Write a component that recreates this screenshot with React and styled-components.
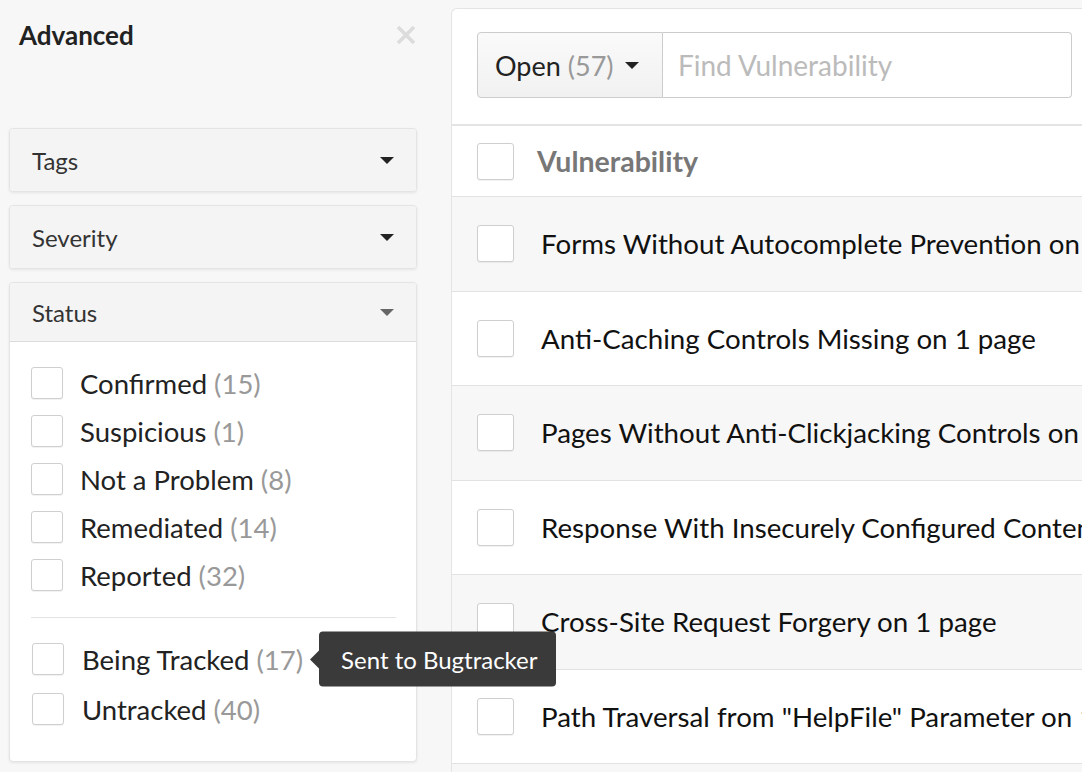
import React from 'react';
import styled, { createGlobalStyle } from 'styled-components';

const GlobalStyle = createGlobalStyle`
  html, body {
    margin: 0;
    padding: 0;
    background: #f7f7f7;
    overflow: hidden;
  }
  body {
    font-family: Lato, "Liberation Sans", sans-serif;
    color: #222;
  }
`;

const Page = styled.div`
  display: flex;
  align-items: flex-start;
  width: 1082px;
  height: 772px;
  overflow: hidden;
`;

const Sidebar = styled.aside`
  flex: 0 0 408px;
  padding: 18px 0 0 9px;
  display: flex;
  flex-direction: column;
`;

const SideHead = styled.div`
  display: flex;
  justify-content: space-between;
  align-items: center;
  padding: 0 0 0 10px;
  height: 34px;
  margin-bottom: 76px;
`;

const Title = styled.h2`
  margin: 0;
  font-size: 26px;
  font-weight: 700;
  color: #222;
`;

const Close = styled.svg`
  width: 20px;
  height: 20px;
  margin-right: 1px;
`;

const Panel = styled.section`
  margin-bottom: 13px;
  border: 1px solid #e4e4e4;
  border-radius: 4px;
  background: #fff;
  box-shadow: 0 1px 3px rgba(0, 0, 0, 0.08);
`;

const PanelHead = styled.div`
  height: ${(p) => (p.$open ? 58 : 62)}px;
  display: flex;
  align-items: center;
  justify-content: space-between;
  padding: 0 22px 0 22px;
  background: #f4f4f4;
  border-radius: ${(p) => (p.$open ? '4px 4px 0 0' : '4px')};
  border-bottom: ${(p) => (p.$open ? '1px solid #dcdcdc' : 'none')};
  font-size: 24px;
  color: #333;
`;

const Caret = styled.span`
  width: 0;
  height: 0;
  border-left: 7px solid transparent;
  border-right: 7px solid transparent;
  border-top: 7px solid ${(p) => p.$color || '#222'};
`;

const PanelBody = styled.div`
  padding: 17px 20px 26px 21px;
`;

const CheckRow = styled.label`
  display: flex;
  align-items: center;
  height: ${(p) => p.$h || 48}px;
  padding-left: ${(p) => p.$indent || 0}px;
  font-size: 27.5px;
  color: #222;
  white-space: nowrap;
`;

const Box = styled.span`
  flex: 0 0 auto;
  box-sizing: border-box;
  width: ${(p) => p.$size || 32}px;
  height: ${(p) => p.$size || 32}px;
  border: 1px solid #cfcfcf;
  border-radius: 3px;
  background: #fff;
  box-shadow: 0 1px 1px rgba(0, 0, 0, 0.06);
  margin-right: ${(p) => p.$gap || 17}px;
`;

const Count = styled.span`
  color: #999;
  margin-left: 7px;
`;

const Anchor = styled.span`
  position: relative;
  display: inline-flex;
  align-items: center;
`;

const Divider = styled.hr`
  border: none;
  border-top: 1px solid #e3e3e3;
  margin: 18px 0 17px 0;
`;

const Tooltip = styled.div`
  position: absolute;
  left: calc(100% + 7px);
  top: 50%;
  transform: translateY(-50%);
  display: flex;
  align-items: center;
  z-index: 5;
  &::before {
    content: '';
    width: 0;
    height: 0;
    border-top: 9px solid transparent;
    border-bottom: 9px solid transparent;
    border-right: 9px solid #3a3a3a;
  }
`;

const TipBox = styled.span`
  height: 55px;
  display: flex;
  align-items: center;
  padding: 0 18px 0 22px;
  background: #3a3a3a;
  border-radius: 4px;
  color: #fff;
  font-size: 24px;
`;

const Main = styled.main`
  flex: 0 0 760px;
  margin: 8px 0 0 34px;
  background: #fff;
  border-left: 1px solid #e4e4e4;
  border-top: 1px solid #e4e4e4;
  border-top-left-radius: 6px;
`;

const Toolbar = styled.div`
  display: flex;
  padding: 23px 0 26px 25px;
  border-bottom: 2px solid #e4e4e4;
`;

const Dropdown = styled.button`
  box-sizing: border-box;
  height: 66px;
  width: 186px;
  display: flex;
  align-items: center;
  padding: 0 0 0 17px;
  background: linear-gradient(#fafafa, #f1f1f1);
  border: 1px solid #ccc;
  border-radius: 4px 0 0 4px;
  font-family: inherit;
  font-size: 27px;
  color: #222;
  & ${Caret} {
    margin-left: 11px;
  }
`;

const Search = styled.div`
  box-sizing: border-box;
  height: 66px;
  width: 409px;
  display: flex;
  align-items: center;
  padding-left: 15px;
  border: 1px solid #ccc;
  border-left: none;
  border-radius: 0 4px 4px 0;
  font-size: 28px;
  color: #bbb;
`;

const Row = styled.div`
  display: flex;
  align-items: center;
  height: ${(p) => p.$h || 93.5}px;
  padding-left: 25px;
  background: ${(p) => (p.$shade ? '#f7f7f7' : '#fff')};
  border-bottom: 1px solid #e2e2e2;
  font-size: 27.7px;
  color: #111;
  white-space: nowrap;
`;

const HeadLabel = styled.span`
  font-size: 28.5px;
  font-weight: 700;
  color: #777;
`;

const statuses = [
  ['Confirmed', 15],
  ['Suspicious', 1],
  ['Not a Problem', 8],
  ['Remediated', 14],
  ['Reported', 32],
];

const vulns = [
  'Forms Without Autocomplete Prevention on 1 page',
  'Anti-Caching Controls Missing on 1 page',
  'Pages Without Anti-Clickjacking Controls on 1 page',
  'Response With Insecurely Configured Content-Type',
  'Cross-Site Request Forgery on 1 page',
  'Path Traversal from "HelpFile" Parameter on 1 page',
  'Reflected Cross-Site Scripting',
];

export default function App() {
  return (
    <>
      <GlobalStyle />
      <Page>
        <Sidebar>
          <SideHead>
            <Title>Advanced</Title>
            <Close viewBox="0 0 20 20">
              <path d="M2 2 L18 18 M18 2 L2 18" stroke="#dcdcdc" strokeWidth="3.6" />
            </Close>
          </SideHead>

          <Panel>
            <PanelHead>
              Tags
              <Caret />
            </PanelHead>
          </Panel>
          <Panel>
            <PanelHead>
              Severity
              <Caret />
            </PanelHead>
          </Panel>
          <Panel>
            <PanelHead $open>
              Status
              <Caret $color="#666" />
            </PanelHead>
            <PanelBody>
              {statuses.map(([name, n]) => (
                <CheckRow key={name}>
                  <Box />
                  {name}
                  <Count>({n})</Count>
                </CheckRow>
              ))}
              <Divider />
              <CheckRow $indent={1} $h={48}>
                <Box $gap={18} />
                <Anchor>
                  Being Tracked
                  <Count>(17)</Count>
                  <Tooltip>
                    <TipBox>Sent to Bugtracker</TipBox>
                  </Tooltip>
                </Anchor>
              </CheckRow>
              <CheckRow $indent={1} $h={52}>
                <Box $gap={18} />
                Untracked
                <Count>(40)</Count>
              </CheckRow>
            </PanelBody>
          </Panel>
          <Panel>
            <PanelHead>
              Date
              <Caret />
            </PanelHead>
          </Panel>
        </Sidebar>

        <Main>
          <Toolbar>
            <Dropdown>
              Open<Count>(57)</Count>
              <Caret />
            </Dropdown>
            <Search>Find Vulnerability</Search>
          </Toolbar>
          <Row $h={70}>
            <Box $size={37} $gap={23} />
            <HeadLabel>Vulnerability</HeadLabel>
          </Row>
          {vulns.map((v, i) => (
            <Row key={v} $shade={i % 2 === 0}>
              <Box $size={37} $gap={27} />
              {v}
            </Row>
          ))}
        </Main>
      </Page>
    </>
  );
}
